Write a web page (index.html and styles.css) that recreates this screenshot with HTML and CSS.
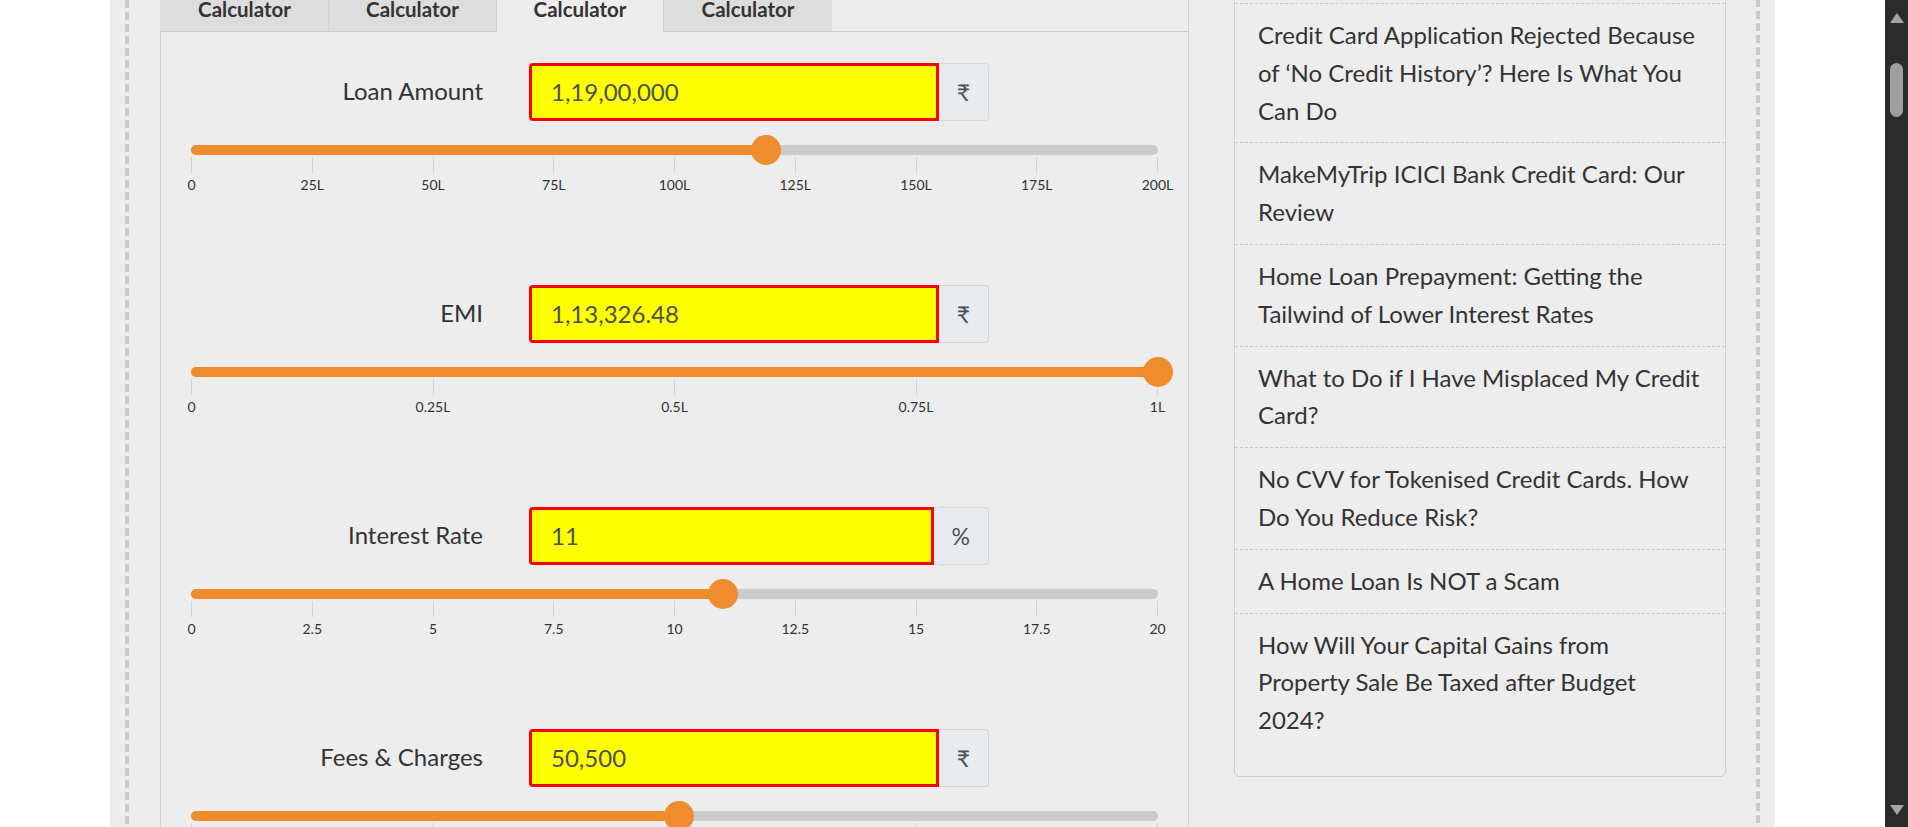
FILE: index.html
```html
<!DOCTYPE html>
<html lang="en">
<head>
<meta charset="utf-8">
<title>EMI Calculator</title>
<link rel="stylesheet" href="styles.css">
</head>
<body>
<div class="screen">
  <div class="site">
    <div class="wrap">
      <div class="frame">
        <section class="calc">
          <div class="tabs">
            <div class="tab">Calculator</div>
            <div class="tab">Calculator</div>
            <div class="tab active">Calculator</div>
            <div class="tab">Calculator</div>
          </div>
          <div class="calc-body">
            <div class="row">
              <div class="field">
                <label class="field-label">Loan Amount</label>
                <div class="input-group">
                  <div class="input">1,19,00,000</div>
                  <div class="addon">₹</div>
                </div>
              </div>
              <div class="slider" style="--v:59.5%"><div class="fill"></div><div class="thumb"></div></div>
              <div class="scale">
                <div class="tick"><span>0</span></div>
                <div class="tick"><span>25L</span></div>
                <div class="tick"><span>50L</span></div>
                <div class="tick"><span>75L</span></div>
                <div class="tick"><span>100L</span></div>
                <div class="tick"><span>125L</span></div>
                <div class="tick"><span>150L</span></div>
                <div class="tick"><span>175L</span></div>
                <div class="tick"><span>200L</span></div>
              </div>
            </div>
            <div class="row">
              <div class="field">
                <label class="field-label">EMI</label>
                <div class="input-group">
                  <div class="input">1,13,326.48</div>
                  <div class="addon">₹</div>
                </div>
              </div>
              <div class="slider" style="--v:100%"><div class="fill"></div><div class="thumb"></div></div>
              <div class="scale">
                <div class="tick"><span>0</span></div>
                <div class="tick"><span>0.25L</span></div>
                <div class="tick"><span>0.5L</span></div>
                <div class="tick"><span>0.75L</span></div>
                <div class="tick"><span>1L</span></div>
              </div>
            </div>
            <div class="row">
              <div class="field">
                <label class="field-label">Interest Rate</label>
                <div class="input-group">
                  <div class="input">11</div>
                  <div class="addon">%</div>
                </div>
              </div>
              <div class="slider" style="--v:55%"><div class="fill"></div><div class="thumb"></div></div>
              <div class="scale">
                <div class="tick"><span>0</span></div>
                <div class="tick"><span>2.5</span></div>
                <div class="tick"><span>5</span></div>
                <div class="tick"><span>7.5</span></div>
                <div class="tick"><span>10</span></div>
                <div class="tick"><span>12.5</span></div>
                <div class="tick"><span>15</span></div>
                <div class="tick"><span>17.5</span></div>
                <div class="tick"><span>20</span></div>
              </div>
            </div>
            <div class="row">
              <div class="field">
                <label class="field-label">Fees &amp; Charges</label>
                <div class="input-group">
                  <div class="input">50,500</div>
                  <div class="addon">₹</div>
                </div>
              </div>
              <div class="slider" style="--v:50.5%"><div class="fill"></div><div class="thumb"></div></div>
              <div class="scale">
                <div class="tick"></div>
                <div class="tick"></div>
                <div class="tick"></div>
                <div class="tick"></div>
                <div class="tick"></div>
              </div>
            </div>
          </div>
        </section>
        <aside class="sidebar">
          <ul class="posts">
            <li>Credit Card Application Rejected Because of ‘No Credit History’? Here Is What You Can Do</li>
            <li>MakeMyTrip ICICI Bank Credit Card: Our Review</li>
            <li>Home Loan Prepayment: Getting the Tailwind of Lower Interest Rates</li>
            <li>What to Do if I Have Misplaced My Credit Card?</li>
            <li>No CVV for Tokenised Credit Cards. How Do You Reduce Risk?</li>
            <li>A Home Loan Is NOT a Scam</li>
            <li>How Will Your Capital Gains from Property Sale Be Taxed after Budget 2024?</li>
          </ul>
        </aside>
      </div>
    </div>
  </div>
  <div class="scrollbar">
    <div class="sb-up"></div>
    <div class="sb-thumb"></div>
    <div class="sb-space"></div>
    <div class="sb-down"></div>
  </div>
</div>
</body>
</html>
```

FILE: styles.css
```css
html, body {
  margin: 0;
  padding: 0;
  height: 100%;
  overflow: hidden;
  background: #ffffff;
}

body {
  font-family: Lato, "Noto Sans", "DejaVu Sans", sans-serif;
  color: #333333;
}

.screen {
  display: flex;
  height: 827px;
  overflow: hidden;
}

.site {
  flex: 1;
  padding-left: 110px;
  overflow: hidden;
}

.wrap {
  display: flow-root;
  width: 1665px;
  height: 100%;
  box-sizing: border-box;
  padding: 0 15px;
  background: #ededed;
}

.frame {
  margin-top: -12px;
  display: flex;
  align-items: flex-start;
  gap: 45px;
  padding: 0 34px 0 35px;
  min-height: 900px;
  background-image:
    repeating-linear-gradient(to bottom, #cbcbcb 0 8px, transparent 8px 12px),
    repeating-linear-gradient(to bottom, #cbcbcb 0 8px, transparent 8px 12px);
  background-size: 4px 100%, 4px 100%;
  background-position: left 0 top 12px, right 0 top 11px;
  background-repeat: no-repeat;
}

/* ---------- Calculator ---------- */
.calc {
  width: 1029px;
  flex: none;
  box-sizing: border-box;
  border-left: 1px solid #d2d2d2;
  border-right: 1px solid #d2d2d2;
}

.tabs {
  display: flex;
  height: 44px;
  box-sizing: border-box;
  border-bottom: 1px solid #cdcdcd;
  margin-left: -1px;
}

.tab {
  width: 168px;
  box-sizing: border-box;
  background: #dddddd;
  border-left: 1px solid #d2d2d2;
  font-weight: bold;
  font-size: 20.5px;
  line-height: 18px;
  padding-top: 12px;
  text-align: center;
  color: #333;
}

.tab:first-child {
  border-left-color: #dddddd;
}

.tab.active {
  background: #ededed;
  height: 44px;
  border-right: 1px solid #d2d2d2;
}

.tab.active + .tab {
  border-left: none;
}

.calc-body {
  padding: 31px 30px 0;
}

.row {
  margin-bottom: 92px;
}

.field {
  display: flex;
  align-items: center;
}

.field-label {
  width: 292px;
  margin-right: 46px;
  padding-bottom: 4px;
  text-align: right;
  font-size: 24px;
  color: #333;
}

.input-group {
  display: flex;
  width: 460px;
  height: 58px;
}

.input {
  flex: 1;
  box-sizing: border-box;
  border: 3px solid #ff0000;
  border-radius: 4px 0 0 4px;
  background: #ffff00;
  padding: 0 0 2px 19px;
  display: flex;
  align-items: center;
  font-size: 24px;
  color: #4b5159;
}

.addon {
  box-sizing: border-box;
  border: 1px solid #d3d8de;
  border-left: none;
  border-radius: 0 4px 4px 0;
  background: #e9ecef;
  padding: 0 18px 0 18px;
  display: flex;
  align-items: center;
  font-size: 23px;
  color: #495057;
}

/* ---------- Slider ---------- */
.slider {
  position: relative;
  height: 10px;
  margin-top: 24px;
  border-radius: 5px;
  background: #cbcbcb;
}

.fill {
  width: var(--v);
  height: 100%;
  border-radius: 5px;
  background: #ee8c2e;
}

.thumb {
  position: absolute;
  top: 50%;
  left: var(--v);
  width: 30px;
  height: 30px;
  border-radius: 50%;
  background: #ee8c2e;
  transform: translate(-50%, -50%);
}

.scale {
  display: flex;
  justify-content: space-between;
  margin-top: 2px;
}

.tick {
  width: 1px;
  display: flex;
  flex-direction: column;
  align-items: center;
}

.tick::before {
  content: "";
  width: 1px;
  height: 16px;
  background: #cfd3d6;
}

.tick span {
  margin-top: 4px;
  font-size: 14px;
  line-height: 16px;
  white-space: nowrap;
  color: #333;
}

/* ---------- Sidebar ---------- */
.sidebar {
  width: 492px;
  flex: none;
  box-sizing: border-box;
  border: 1px solid #cfcfcf;
  border-radius: 0 0 5px 5px;
  padding: 14px 0 24px;
}

.posts {
  list-style: none;
  margin: 0;
  padding: 0;
}

.posts li {
  border-top: 1px dashed #c9c9c9;
  padding: 12px 23px 13px 23px;
  font-size: 24px;
  line-height: 37.8px;
  color: #333;
}

/* ---------- Scrollbar ---------- */
.scrollbar {
  width: 23px;
  flex: none;
  background: #2b2b2b;
  display: flex;
  flex-direction: column;
  align-items: center;
}

.sb-up {
  margin-top: 13px;
  width: 0;
  height: 0;
  border-left: 7px solid transparent;
  border-right: 7px solid transparent;
  border-bottom: 10px solid #a3a3a3;
}

.sb-thumb {
  margin-top: 40px;
  width: 13px;
  height: 54px;
  border-radius: 7px;
  background: #9f9f9f;
}

.sb-space {
  flex: 1;
}

.sb-down {
  margin-bottom: 12px;
  width: 0;
  height: 0;
  border-left: 7px solid transparent;
  border-right: 7px solid transparent;
  border-top: 10px solid #a3a3a3;
}
```
